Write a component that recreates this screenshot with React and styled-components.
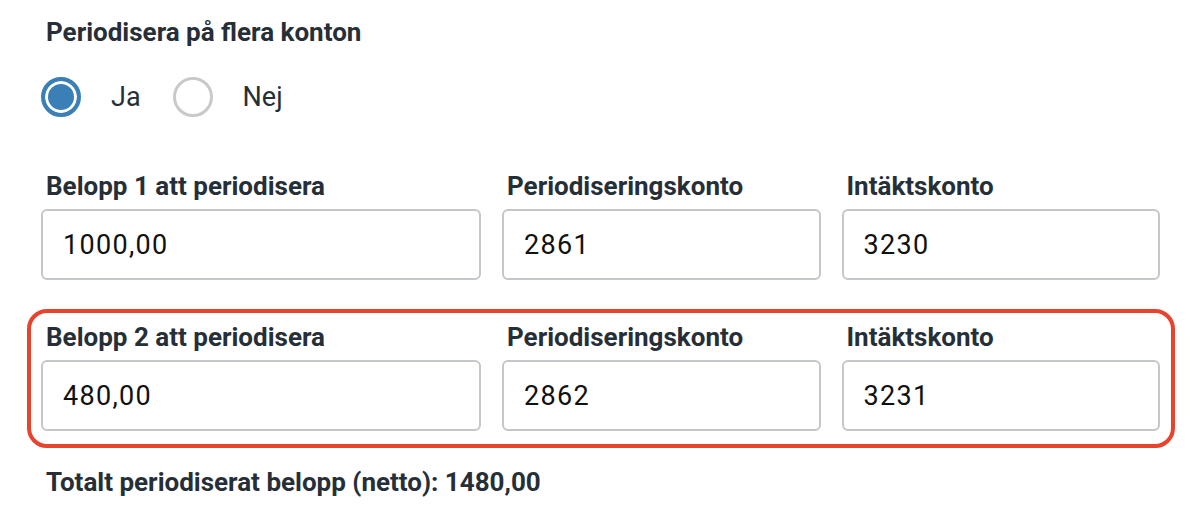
import styled, { createGlobalStyle } from "styled-components";

const GlobalStyle = createGlobalStyle`
  body {
    margin: 0;
    background: #fff;
    font-family: Roboto, "Liberation Sans", sans-serif;
  }
`;

const rows = [
  { id: 1, amount: "1000,00", accrual: "2861", income: "3230", highlighted: false },
  { id: 2, amount: "480,00", accrual: "2862", income: "3231", highlighted: true },
];

export default function App() {
  return (
    <Page>
      <GlobalStyle />
      <Title>Periodisera på flera konton</Title>
      <RadioGroup>
        <RadioOption>
          <Radio checked />
          <RadioText>Ja</RadioText>
        </RadioOption>
        <RadioOption>
          <Radio />
          <RadioText>Nej</RadioText>
        </RadioOption>
      </RadioGroup>
      <Rows>
        {rows.map((r) => (
          <AccountRow key={r.id} $highlighted={r.highlighted}>
            <Field>
              <Label>Belopp {r.id} att periodisera</Label>
              <Input defaultValue={r.amount} />
            </Field>
            <Field>
              <Label>Periodiseringskonto</Label>
              <Input defaultValue={r.accrual} />
            </Field>
            <Field>
              <Label>Intäktskonto</Label>
              <Input defaultValue={r.income} />
            </Field>
          </AccountRow>
        ))}
      </Rows>
      <Total>Totalt periodiserat belopp (netto): 1480,00</Total>
    </Page>
  );
}

const Page = styled.div`
  padding: 17px 23px 20px 27px;
  color: #262f37;
`;

const Title = styled.h2`
  margin: 0;
  padding-left: 19px;
  font-size: 26px;
  line-height: 30px;
  font-weight: 700;
`;

const RadioGroup = styled.div`
  display: flex;
  align-items: center;
  gap: 32px;
  margin-top: 30px;
  padding-left: 14px;
`;

const RadioOption = styled.label`
  display: flex;
  align-items: center;
  gap: 30px;
  cursor: pointer;
`;

const Radio = styled.span`
  box-sizing: border-box;
  width: 40px;
  height: 40px;
  border-radius: 50%;
  border: ${(p) => (p.checked ? "4px solid #3b7fb7" : "3px solid #c9c9c9")};
  background: ${(p) => (p.checked ? "#3b7fb7" : "#fff")};
  box-shadow: ${(p) => (p.checked ? "inset 0 0 0 3px #fff" : "none")};
`;

const RadioText = styled.span`
  font-size: 27px;
  line-height: 40px;
  color: #262f37;
`;

const Rows = styled.div`
  display: flex;
  flex-direction: column;
  gap: 12px;
  margin-top: 41px;
`;

const AccountRow = styled.div`
  display: grid;
  grid-template-columns: 440px 1fr 1fr;
  gap: 21px;
  padding: 9px 11px 13px 10px;
  border: 4px solid ${(p) => (p.$highlighted ? "#e8432d" : "transparent")};
  border-radius: 20px;
`;

const Field = styled.div`
  display: flex;
  flex-direction: column;
  gap: 8px;
`;

const Label = styled.label`
  padding-left: 5px;
  font-size: 26px;
  line-height: 30px;
  font-weight: 700;
  color: #262f37;
`;

const Input = styled.input`
  box-sizing: border-box;
  height: 71px;
  width: 100%;
  padding: 0 20px;
  border: 2px solid #c4c7ca;
  border-radius: 6px;
  font-family: Roboto, "Liberation Sans", sans-serif;
  font-size: 27px;
  letter-spacing: 1.3px;
  color: #111;
  outline: none;
`;

const Total = styled.p`
  margin: 19px 0 0;
  padding-left: 19px;
  font-size: 26px;
  line-height: 30px;
  font-weight: 700;
`;
